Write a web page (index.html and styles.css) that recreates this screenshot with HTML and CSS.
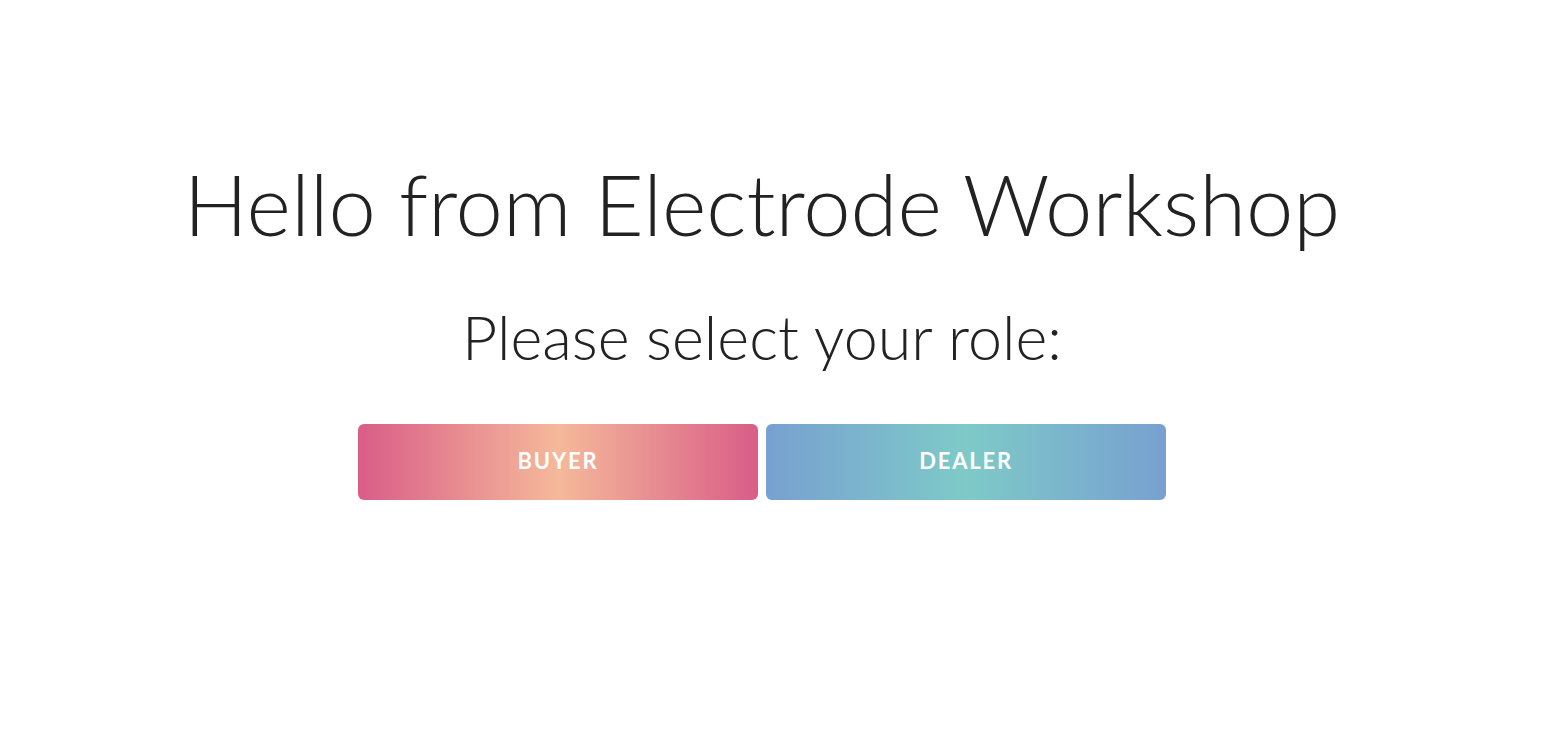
FILE: index.html
```html
<!DOCTYPE html>
<html>
<head>
<meta charset="utf-8">
<link rel="stylesheet" href="styles.css">
</head>
<body>
<main class="page">
  <h1 class="title">Hello from Electrode Workshop</h1>
  <h2 class="subtitle">Please select your role:</h2>
  <div class="roles">
    <button class="role role-buyer">BUYER</button>
    <button class="role role-dealer">DEALER</button>
  </div>
</main>
</body>
</html>
```
FILE: styles.css
```css
html, body {
  margin: 0;
  padding: 0;
  background: #fff;
}
.page {
  display: flex;
  flex-direction: column;
  align-items: center;
  padding: 153px 40px 0 0;
  font-family: Lato, "Open Sans", sans-serif;
  color: #222;
}
.title {
  margin: 0;
  font-weight: 300;
  font-size: 85px;
  line-height: 100px;
  letter-spacing: 0;
}
.subtitle {
  margin: 44px 0 0;
  font-weight: 300;
  font-size: 61px;
  line-height: 80px;
}
.roles {
  display: flex;
  gap: 8px;
  margin-top: 47px;
}
.role {
  width: 400px;
  height: 76px;
  padding: 0 0 3px;
  border: 0;
  border-radius: 6px;
  color: #fff;
  font-family: Lato, sans-serif;
  font-weight: 700;
  font-size: 22px;
  letter-spacing: 1.8px;
  cursor: pointer;
}
.role-buyer {
  background: linear-gradient(90deg, #d95d88 0%, #f5b99a 50%, #d95d88 100%);
}
.role-dealer {
  background: linear-gradient(90deg, #78a0d0 0%, #7ecac8 50%, #78a0d0 100%);
}
```
